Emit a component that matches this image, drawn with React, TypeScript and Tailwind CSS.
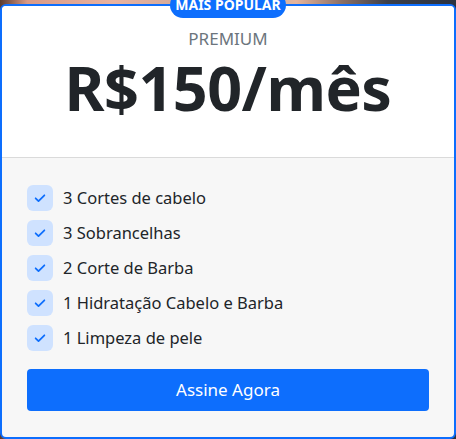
import React from "react";

const items = [
  "3 Cortes de cabelo",
  "3 Sobrancelhas",
  "2 Corte de Barba",
  "1 Hidratação Cabelo e Barba",
  "1 Limpeza de pele",
];

function Check() {
  return (
    <svg width="14" height="14" viewBox="0 0 16 16" fill="none">
      <path d="M3 8.3l3.3 3.3L13 4.9" stroke="#0d6efd" strokeWidth="2" strokeLinecap="round" strokeLinejoin="round" />
    </svg>
  );
}

export default function App() {
  return (
    <div
      className="w-[456px] h-[439px] overflow-hidden pt-[4px] bg-[linear-gradient(90deg,#5a3a30_0%,#d99a86_6%,#e9b3a0_25%,#c9a596_45%,#b9b1ac_55%,#e5b49c_65%,#8a6f66_75%,#3b3f4a_85%,#2c3340_100%)]"
      style={{ fontFamily: '"Noto Sans", "Open Sans", sans-serif' }}
    >
      <div className="relative h-[435px] border-2 border-[#0d6efd] rounded-[6px] bg-[#f7f7f7] flex flex-col">
        <div className="absolute left-1/2 -translate-x-1/2 top-[-14px] h-[26px] w-[116px] rounded-full bg-[#0d6efd] flex items-center justify-center text-white font-bold text-[14px] leading-none">
          MAIS POPULAR
        </div>
        <div className="h-[152px] bg-white border-b border-[#dadada] rounded-t-[4px] flex flex-col items-center pt-[20px]">
          <div className="text-[#6c757d] text-[17px] leading-[26px]">PREMIUM</div>
          <div className="text-[#212529] font-bold text-[61px] leading-[64px] tracking-[-0.5px] mt-[4px]">R$150/mês</div>
        </div>
        <div className="flex-1 px-[25px] pt-[27px] flex flex-col">
          <ul className="flex flex-col gap-[9px]">
            {items.map((t) => (
              <li key={t} className="flex items-center gap-[10px] h-[26px]">
                <span className="w-[26px] h-[26px] rounded-[6px] bg-[#cfe2ff] flex items-center justify-center shrink-0">
                  <Check />
                </span>
                <span className="text-[#212529] text-[16.5px] leading-none">{t}</span>
              </li>
            ))}
          </ul>
          <button className="mt-[18px] h-[42px] w-full rounded-[4px] bg-[#0d6efd] text-white text-[17px]">
            Assine Agora
          </button>
        </div>
      </div>
    </div>
  );
}
